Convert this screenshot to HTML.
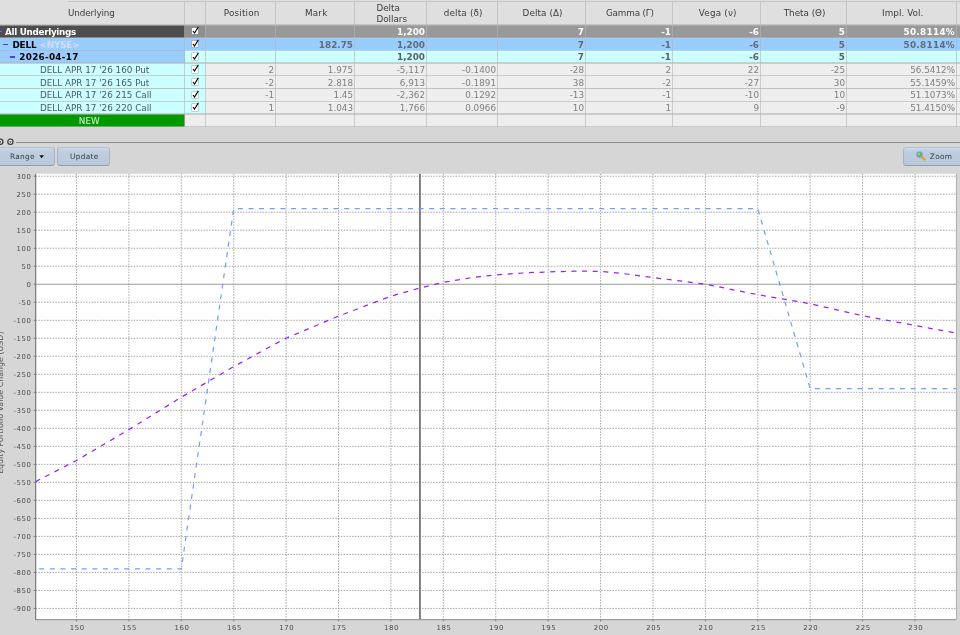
<!DOCTYPE html><html><head><meta charset="utf-8"><title>Risk Navigator</title><style>
html,body{margin:0;padding:0}
body{width:960px;height:635px;overflow:hidden;background:#d6d6d6;position:relative;font-family:"DejaVu Sans","Liberation Sans",sans-serif;font-size:8.8px;color:#444}
.a{position:absolute}
.c{position:absolute;box-sizing:border-box}
.t{position:absolute;white-space:pre;line-height:12px;height:12px}
.r{text-align:right}
.m{text-align:center}
.b{font-weight:bold}
.btn{position:absolute;box-sizing:border-box;border:1px solid #a3b3c6;border-top-color:#b3c3d5;border-bottom-color:#8e9fb4;border-radius:3.5px;background:linear-gradient(#cbdaea 0,#bfcede 22%,#bac9da 100%);}
.cb{position:absolute;width:6.6px;height:6.4px;background:#fff;box-shadow:0 0 0 0.4px #999}

</style></head><body><div id="w" style="position:absolute;left:0;top:0;width:960px;height:635px;will-change:transform">
<div class="c" style="left:0;top:0;width:960px;height:25.00px;background:#dfdfdf"></div>
<div class="c" style="left:68px;top:0.9px;width:892px;height:1.3px;background:#c4c4c4"></div>
<div class="c" style="left:0.00px;top:25.00px;width:184.50px;height:12.70px;background:#4d4d4d"></div>
<div class="c" style="left:184.50px;top:25.00px;width:21.00px;height:12.70px;background:#8f8f8f"></div>
<div class="c" style="left:205.50px;top:25.00px;width:754.50px;height:12.70px;background:#999999"></div>
<div class="c" style="left:0.00px;top:37.70px;width:184.50px;height:12.70px;background:#99ccff"></div>
<div class="c" style="left:184.50px;top:37.70px;width:21.00px;height:12.70px;background:#99ccff"></div>
<div class="c" style="left:205.50px;top:37.70px;width:754.50px;height:12.70px;background:#99ccff"></div>
<div class="c" style="left:0.00px;top:50.40px;width:184.50px;height:12.70px;background:#99ccff"></div>
<div class="c" style="left:184.50px;top:50.40px;width:21.00px;height:12.70px;background:#ccffff"></div>
<div class="c" style="left:205.50px;top:50.40px;width:754.50px;height:12.70px;background:#ccffff"></div>
<div class="c" style="left:0.00px;top:63.10px;width:184.50px;height:12.70px;background:#ccffff"></div>
<div class="c" style="left:184.50px;top:63.10px;width:21.00px;height:12.70px;background:#ccffff"></div>
<div class="c" style="left:205.50px;top:63.10px;width:754.50px;height:12.70px;background:#eeeeee"></div>
<div class="c" style="left:0.00px;top:75.80px;width:184.50px;height:12.70px;background:#ccffff"></div>
<div class="c" style="left:184.50px;top:75.80px;width:21.00px;height:12.70px;background:#ccffff"></div>
<div class="c" style="left:205.50px;top:75.80px;width:754.50px;height:12.70px;background:#eeeeee"></div>
<div class="c" style="left:0.00px;top:88.50px;width:184.50px;height:12.70px;background:#ccffff"></div>
<div class="c" style="left:184.50px;top:88.50px;width:21.00px;height:12.70px;background:#ccffff"></div>
<div class="c" style="left:205.50px;top:88.50px;width:754.50px;height:12.70px;background:#eeeeee"></div>
<div class="c" style="left:0.00px;top:101.20px;width:184.50px;height:12.70px;background:#ccffff"></div>
<div class="c" style="left:184.50px;top:101.20px;width:21.00px;height:12.70px;background:#ccffff"></div>
<div class="c" style="left:205.50px;top:101.20px;width:754.50px;height:12.70px;background:#eeeeee"></div>
<div class="c" style="left:0.00px;top:113.90px;width:184.50px;height:12.70px;background:#009900"></div>
<div class="c" style="left:184.50px;top:113.90px;width:21.00px;height:12.70px;background:#eeeeee"></div>
<div class="c" style="left:205.50px;top:113.90px;width:754.50px;height:12.70px;background:#eeeeee"></div>
<div class="c" style="left:0;top:24.30px;width:960px;height:1.4px;background:rgba(180,180,180,.6)"></div>
<div class="c" style="left:0;top:37.00px;width:960px;height:1.4px;background:rgba(180,180,180,.6)"></div>
<div class="c" style="left:0;top:49.70px;width:960px;height:1.4px;background:rgba(180,180,180,.6)"></div>
<div class="c" style="left:0;top:62.40px;width:960px;height:1.4px;background:rgba(180,180,180,.6)"></div>
<div class="c" style="left:0;top:75.10px;width:960px;height:1.4px;background:rgba(180,180,180,.6)"></div>
<div class="c" style="left:0;top:87.80px;width:960px;height:1.4px;background:rgba(180,180,180,.6)"></div>
<div class="c" style="left:0;top:100.50px;width:960px;height:1.4px;background:rgba(180,180,180,.6)"></div>
<div class="c" style="left:0;top:113.20px;width:960px;height:1.4px;background:rgba(180,180,180,.6)"></div>
<div class="c" style="left:0;top:125.90px;width:960px;height:1.4px;background:rgba(180,180,180,.6)"></div>
<div class="c" style="left:183.80px;top:2.00px;width:1.4px;height:124.60px;background:rgba(180,180,180,.62)"></div>
<div class="c" style="left:204.80px;top:2.00px;width:1.4px;height:124.60px;background:rgba(180,180,180,.62)"></div>
<div class="c" style="left:274.80px;top:2.00px;width:1.4px;height:124.60px;background:rgba(180,180,180,.62)"></div>
<div class="c" style="left:353.80px;top:2.00px;width:1.4px;height:124.60px;background:rgba(180,180,180,.62)"></div>
<div class="c" style="left:425.80px;top:2.00px;width:1.4px;height:124.60px;background:rgba(180,180,180,.62)"></div>
<div class="c" style="left:496.80px;top:2.00px;width:1.4px;height:124.60px;background:rgba(180,180,180,.62)"></div>
<div class="c" style="left:584.80px;top:2.00px;width:1.4px;height:124.60px;background:rgba(180,180,180,.62)"></div>
<div class="c" style="left:671.80px;top:2.00px;width:1.4px;height:124.60px;background:rgba(180,180,180,.62)"></div>
<div class="c" style="left:759.80px;top:2.00px;width:1.4px;height:124.60px;background:rgba(180,180,180,.62)"></div>
<div class="c" style="left:845.80px;top:2.00px;width:1.4px;height:124.60px;background:rgba(180,180,180,.62)"></div>
<div class="c" style="left:955.80px;top:2.00px;width:1.4px;height:124.60px;background:rgba(180,180,180,.62)"></div>
<div class="t m" style="left:-0.85px;width:184.50px;top:7.30px;color:#3c3c3c;letter-spacing:-0.10px;">Underlying</div>
<div class="t m" style="left:206.70px;width:70.00px;top:7.30px;color:#3c3c3c;letter-spacing:0.20px;">Position</div>
<div class="t m" style="left:276.70px;width:79.00px;top:7.30px;color:#3c3c3c;letter-spacing:0.20px;">Mark</div>
<div class="t m" style="left:427.70px;width:71.00px;top:7.30px;color:#3c3c3c;letter-spacing:0.20px;">delta (δ)</div>
<div class="t m" style="left:498.55px;width:88.00px;top:7.30px;color:#3c3c3c;letter-spacing:0.10px;">Delta (Δ)</div>
<div class="t m" style="left:586.42px;width:87.00px;top:7.30px;color:#3c3c3c;letter-spacing:-0.15px;">Gamma (Γ)</div>
<div class="t m" style="left:673.70px;width:88.00px;top:7.30px;color:#3c3c3c;letter-spacing:0.20px;">Vega (ν)</div>
<div class="t m" style="left:761.60px;width:86.00px;top:7.30px;color:#3c3c3c;letter-spacing:0.00px;">Theta (Θ)</div>
<div class="t m" style="left:847.73px;width:110.00px;top:7.30px;color:#3c3c3c;letter-spacing:0.05px;">Impl. Vol.</div>
<div class="t " style="left:376.40px;width:43.60px;top:1.60px;color:#3c3c3c;">Delta</div>
<div class="t " style="left:376.40px;width:43.60px;top:12.80px;color:#3c3c3c;">Dollars</div>
<div class="t b" style="left:5.00px;width:179.00px;top:25.85px;color:#fff;letter-spacing:-0.3px;">All Underlyings</div>
<div class="c" style="left:-2.00px;top:30.95px;width:4.20px;height:1.50px;background:#6a6aff"></div>
<div class="c" style="left:3.30px;top:43.65px;width:5.10px;height:1.50px;background:#4646d2"></div>
<div class="t b" style="left:12.40px;width:171.60px;top:38.55px;color:#000;letter-spacing:-0.12px;">DELL <span style="color:#d6dcee">&lt;NYSE&gt;</span></div>
<div class="c" style="left:10.30px;top:56.35px;width:5.20px;height:1.50px;background:#4646d2"></div>
<div class="t b" style="left:19.30px;width:164.70px;top:51.25px;color:#000;letter-spacing:0.3px;">2026-04-17</div>
<div class="t " style="left:40.00px;width:144.00px;top:63.95px;color:#4a5a66;">DELL APR 17 '26 160 Put</div>
<div class="t " style="left:40.00px;width:144.00px;top:76.65px;color:#4a5a66;">DELL APR 17 '26 165 Put</div>
<div class="t " style="left:40.00px;width:144.00px;top:89.35px;color:#4a5a66;">DELL APR 17 '26 215 Call</div>
<div class="t " style="left:40.00px;width:144.00px;top:102.05px;color:#4a5a66;">DELL APR 17 '26 220 Call</div>
<div class="t m" style="left:0.00px;width:178.50px;top:114.75px;color:#e6eee6;">NEW</div>
<div class="cb" style="left:191.6px;top:28.05px"></div>
<svg class="a" style="left:190px;top:26.25px" width="10" height="10" viewBox="0 0 10 10"><path d="M3 5.0 L4.5 7.0 L8.4 0.9" fill="none" stroke="#000" stroke-width="1.1"/></svg>
<div class="cb" style="left:191.6px;top:40.75px"></div>
<svg class="a" style="left:190px;top:38.95px" width="10" height="10" viewBox="0 0 10 10"><path d="M3 5.0 L4.5 7.0 L8.4 0.9" fill="none" stroke="#000" stroke-width="1.1"/></svg>
<div class="cb" style="left:191.6px;top:53.45px"></div>
<svg class="a" style="left:190px;top:51.65px" width="10" height="10" viewBox="0 0 10 10"><path d="M3 5.0 L4.5 7.0 L8.4 0.9" fill="none" stroke="#000" stroke-width="1.1"/></svg>
<div class="cb" style="left:191.6px;top:66.15px"></div>
<svg class="a" style="left:190px;top:64.35px" width="10" height="10" viewBox="0 0 10 10"><path d="M3 5.0 L4.5 7.0 L8.4 0.9" fill="none" stroke="#000" stroke-width="1.1"/></svg>
<div class="cb" style="left:191.6px;top:78.85px"></div>
<svg class="a" style="left:190px;top:77.05px" width="10" height="10" viewBox="0 0 10 10"><path d="M3 5.0 L4.5 7.0 L8.4 0.9" fill="none" stroke="#000" stroke-width="1.1"/></svg>
<div class="cb" style="left:191.6px;top:91.55px"></div>
<svg class="a" style="left:190px;top:89.75px" width="10" height="10" viewBox="0 0 10 10"><path d="M3 5.0 L4.5 7.0 L8.4 0.9" fill="none" stroke="#000" stroke-width="1.1"/></svg>
<div class="cb" style="left:191.6px;top:104.25px"></div>
<svg class="a" style="left:190px;top:102.45px" width="10" height="10" viewBox="0 0 10 10"><path d="M3 5.0 L4.5 7.0 L8.4 0.9" fill="none" stroke="#000" stroke-width="1.1"/></svg>
<div class="t r b" style="left:354.50px;width:70.50px;top:25.85px;color:#fff;letter-spacing:0.03px;">1,200</div>
<div class="t r b" style="left:497.50px;width:86.50px;top:25.85px;color:#fff;letter-spacing:0.03px;">7</div>
<div class="t r b" style="left:585.50px;width:85.50px;top:25.85px;color:#fff;letter-spacing:0.03px;">-1</div>
<div class="t r b" style="left:672.50px;width:86.50px;top:25.85px;color:#fff;letter-spacing:0.03px;">-6</div>
<div class="t r b" style="left:760.50px;width:84.50px;top:25.85px;color:#fff;letter-spacing:0.03px;">5</div>
<div class="t r b" style="left:846.50px;width:108.50px;top:25.85px;color:#fff;letter-spacing:0.33px;margin-right:-0.33px;">50.8114%</div>
<div class="t r b" style="left:275.50px;width:77.50px;top:38.55px;color:#636b77;letter-spacing:0.03px;">182.75</div>
<div class="t r b" style="left:354.50px;width:70.50px;top:38.55px;color:#636b77;letter-spacing:0.03px;">1,200</div>
<div class="t r b" style="left:497.50px;width:86.50px;top:38.55px;color:#636b77;letter-spacing:0.03px;">7</div>
<div class="t r b" style="left:585.50px;width:85.50px;top:38.55px;color:#636b77;letter-spacing:0.03px;">-1</div>
<div class="t r b" style="left:672.50px;width:86.50px;top:38.55px;color:#636b77;letter-spacing:0.03px;">-6</div>
<div class="t r b" style="left:760.50px;width:84.50px;top:38.55px;color:#636b77;letter-spacing:0.03px;">5</div>
<div class="t r b" style="left:846.50px;width:108.50px;top:38.55px;color:#636b77;letter-spacing:0.33px;margin-right:-0.33px;">50.8114%</div>
<div class="t r b" style="left:354.50px;width:70.50px;top:51.25px;color:#5a5f66;letter-spacing:0.03px;">1,200</div>
<div class="t r b" style="left:497.50px;width:86.50px;top:51.25px;color:#5a5f66;letter-spacing:0.03px;">7</div>
<div class="t r b" style="left:585.50px;width:85.50px;top:51.25px;color:#5a5f66;letter-spacing:0.03px;">-1</div>
<div class="t r b" style="left:672.50px;width:86.50px;top:51.25px;color:#5a5f66;letter-spacing:0.03px;">-6</div>
<div class="t r b" style="left:760.50px;width:84.50px;top:51.25px;color:#5a5f66;letter-spacing:0.03px;">5</div>
<div class="t r " style="left:205.50px;width:68.50px;top:63.95px;color:#808080;letter-spacing:0px;">2</div>
<div class="t r " style="left:275.50px;width:77.50px;top:63.95px;color:#808080;letter-spacing:0px;">1.975</div>
<div class="t r " style="left:354.50px;width:70.50px;top:63.95px;color:#808080;letter-spacing:0px;">-5,117</div>
<div class="t r " style="left:426.50px;width:69.50px;top:63.95px;color:#808080;letter-spacing:0px;">-0.1400</div>
<div class="t r " style="left:497.50px;width:86.50px;top:63.95px;color:#808080;letter-spacing:0px;">-28</div>
<div class="t r " style="left:585.50px;width:85.50px;top:63.95px;color:#808080;letter-spacing:0px;">2</div>
<div class="t r " style="left:672.50px;width:86.50px;top:63.95px;color:#808080;letter-spacing:0px;">22</div>
<div class="t r " style="left:760.50px;width:84.50px;top:63.95px;color:#808080;letter-spacing:0px;">-25</div>
<div class="t r " style="left:846.50px;width:108.50px;top:63.95px;color:#808080;letter-spacing:0px;">56.5412%</div>
<div class="t r " style="left:205.50px;width:68.50px;top:76.65px;color:#808080;letter-spacing:0px;">-2</div>
<div class="t r " style="left:275.50px;width:77.50px;top:76.65px;color:#808080;letter-spacing:0px;">2.818</div>
<div class="t r " style="left:354.50px;width:70.50px;top:76.65px;color:#808080;letter-spacing:0px;">6,913</div>
<div class="t r " style="left:426.50px;width:69.50px;top:76.65px;color:#808080;letter-spacing:0px;">-0.1891</div>
<div class="t r " style="left:497.50px;width:86.50px;top:76.65px;color:#808080;letter-spacing:0px;">38</div>
<div class="t r " style="left:585.50px;width:85.50px;top:76.65px;color:#808080;letter-spacing:0px;">-2</div>
<div class="t r " style="left:672.50px;width:86.50px;top:76.65px;color:#808080;letter-spacing:0px;">-27</div>
<div class="t r " style="left:760.50px;width:84.50px;top:76.65px;color:#808080;letter-spacing:0px;">30</div>
<div class="t r " style="left:846.50px;width:108.50px;top:76.65px;color:#808080;letter-spacing:0px;">55.1459%</div>
<div class="t r " style="left:205.50px;width:68.50px;top:89.35px;color:#808080;letter-spacing:0px;">-1</div>
<div class="t r " style="left:275.50px;width:77.50px;top:89.35px;color:#808080;letter-spacing:0px;">1.45</div>
<div class="t r " style="left:354.50px;width:70.50px;top:89.35px;color:#808080;letter-spacing:0px;">-2,362</div>
<div class="t r " style="left:426.50px;width:69.50px;top:89.35px;color:#808080;letter-spacing:0px;">0.1292</div>
<div class="t r " style="left:497.50px;width:86.50px;top:89.35px;color:#808080;letter-spacing:0px;">-13</div>
<div class="t r " style="left:585.50px;width:85.50px;top:89.35px;color:#808080;letter-spacing:0px;">-1</div>
<div class="t r " style="left:672.50px;width:86.50px;top:89.35px;color:#808080;letter-spacing:0px;">-10</div>
<div class="t r " style="left:760.50px;width:84.50px;top:89.35px;color:#808080;letter-spacing:0px;">10</div>
<div class="t r " style="left:846.50px;width:108.50px;top:89.35px;color:#808080;letter-spacing:0px;">51.1073%</div>
<div class="t r " style="left:205.50px;width:68.50px;top:102.05px;color:#808080;letter-spacing:0px;">1</div>
<div class="t r " style="left:275.50px;width:77.50px;top:102.05px;color:#808080;letter-spacing:0px;">1.043</div>
<div class="t r " style="left:354.50px;width:70.50px;top:102.05px;color:#808080;letter-spacing:0px;">1,766</div>
<div class="t r " style="left:426.50px;width:69.50px;top:102.05px;color:#808080;letter-spacing:0px;">0.0966</div>
<div class="t r " style="left:497.50px;width:86.50px;top:102.05px;color:#808080;letter-spacing:0px;">10</div>
<div class="t r " style="left:585.50px;width:85.50px;top:102.05px;color:#808080;letter-spacing:0px;">1</div>
<div class="t r " style="left:672.50px;width:86.50px;top:102.05px;color:#808080;letter-spacing:0px;">9</div>
<div class="t r " style="left:760.50px;width:84.50px;top:102.05px;color:#808080;letter-spacing:0px;">-9</div>
<div class="t r " style="left:846.50px;width:108.50px;top:102.05px;color:#808080;letter-spacing:0px;">51.4150%</div>
<div class="c" style="left:16.4px;top:142px;width:944px;height:1.2px;background:#8e8e8e"></div>
<svg class="a" style="left:-4px;top:137px" width="20" height="10" viewBox="0 0 20 10"><circle cx="4.3" cy="4.8" r="2.6" fill="#fff" stroke="#3a3a3a" stroke-width="1.3"/><path d="M3 4.2 L5.6 4.2 L4.3 6.1Z" fill="#222"/><circle cx="14.4" cy="4.8" r="2.6" fill="#fff" stroke="#3a3a3a" stroke-width="1.3"/><path d="M13.1 4.2 L15.7 4.2 L14.4 6.1Z" fill="#222"/></svg>
<div class="btn" style="left:-6px;top:147.1px;width:60.5px;height:18.7px"></div>
<div class="btn" style="left:57.3px;top:147.1px;width:52.3px;height:18.7px"></div>
<div class="btn" style="left:902.9px;top:147.1px;width:66px;height:18.7px"></div>
<div class="t " style="left:10.00px;width:30.00px;top:150.90px;color:#333c48;font-size:7.4px;letter-spacing:0.3px;">Range</div>
<svg class="a" style="left:38.5px;top:154.5px" width="6" height="4" viewBox="0 0 6 4"><path d="M0.3 0.3 L5 0.3 L2.65 3.2Z" fill="#111"/></svg>
<div class="t " style="left:70.00px;width:30.00px;top:150.90px;color:#333c48;font-size:7.4px;letter-spacing:0.3px;">Update</div>
<div class="t " style="left:929.80px;width:30.20px;top:150.90px;color:#333c48;font-size:7.4px;letter-spacing:0.3px;">Zoom</div>
<svg class="a" style="left:915px;top:150px" width="12" height="12" viewBox="0 0 12 12"><line x1="6.4" y1="6.6" x2="9.6" y2="9.7" stroke="#ee9a3c" stroke-width="2.4" stroke-linecap="round"/><circle cx="4.5" cy="4.5" r="2.65" fill="#46c046" stroke="#8ea3b7" stroke-width="1.4"/><circle cx="4" cy="4.1" r="0.9" fill="#b8eeb8"/></svg>
<svg class="a" style="left:0;top:0" width="960" height="635" viewBox="0 0 960 635" font-size="6.9" letter-spacing="0.62" fill="#4c4c4c">
<defs><clipPath id="pc"><rect x="35.70" y="173.80" width="920.40" height="445.50"/></clipPath></defs>
<rect x="35.70" y="173.80" width="920.40" height="445.50" fill="#fff"/>
<path d="M35.70 608.43H956.10M35.70 590.42H956.10M35.70 572.41H956.10M35.70 554.40H956.10M35.70 536.39H956.10M35.70 518.38H956.10M35.70 500.37H956.10M35.70 482.36H956.10M35.70 464.35H956.10M35.70 446.34H956.10M35.70 428.33H956.10M35.70 410.32H956.10M35.70 392.31H956.10M35.70 374.30H956.10M35.70 356.29H956.10M35.70 338.28H956.10M35.70 320.27H956.10M35.70 302.26H956.10M35.70 266.24H956.10M35.70 248.23H956.10M35.70 230.22H956.10M35.70 212.21H956.10M35.70 194.20H956.10M35.70 176.19H956.10M76.50 173.80V619.30M128.91 173.80V619.30M181.31 173.80V619.30M233.72 173.80V619.30M286.12 173.80V619.30M338.52 173.80V619.30M390.93 173.80V619.30M443.33 173.80V619.30M495.74 173.80V619.30M548.14 173.80V619.30M600.55 173.80V619.30M652.96 173.80V619.30M705.36 173.80V619.30M757.76 173.80V619.30M810.17 173.80V619.30M862.58 173.80V619.30M914.98 173.80V619.30" stroke="#9c9c9c" stroke-width="0.9" stroke-dasharray="1.5 1.3" fill="none"/>
<path d="M35.70 284.25H956.10" stroke="#9a9a9a" stroke-width="1.1"/>
<path d="M35.70 619.60H956.90" stroke="#9e9e9e" stroke-width="1.4" fill="none"/>
<path d="M956.50 173.80V620.10" stroke="#b4b4b4" stroke-width="1.2" fill="none"/>
<path d="M35.70 173.80V620.10" stroke="#707070" stroke-width="1.1" fill="none"/>
<path d="M35.70 608.43h-2M35.70 590.42h-2M35.70 572.41h-2M35.70 554.40h-2M35.70 536.39h-2M35.70 518.38h-2M35.70 500.37h-2M35.70 482.36h-2M35.70 464.35h-2M35.70 446.34h-2M35.70 428.33h-2M35.70 410.32h-2M35.70 392.31h-2M35.70 374.30h-2M35.70 356.29h-2M35.70 338.28h-2M35.70 320.27h-2M35.70 302.26h-2M35.70 284.25h-2M35.70 266.24h-2M35.70 248.23h-2M35.70 230.22h-2M35.70 212.21h-2M35.70 194.20h-2M35.70 176.19h-2M76.50 619.30v2M128.91 619.30v2M181.31 619.30v2M233.72 619.30v2M286.12 619.30v2M338.52 619.30v2M390.93 619.30v2M443.33 619.30v2M495.74 619.30v2M548.14 619.30v2M600.55 619.30v2M652.96 619.30v2M705.36 619.30v2M757.76 619.30v2M810.17 619.30v2M862.58 619.30v2M914.98 619.30v2" stroke="#707070" stroke-width="0.9" fill="none"/>
<g clip-path="url(#pc)" fill="none" stroke-width="1.3">
<path d="M419.95 173.80V619.30" stroke="#6c6c6c" stroke-width="1.7"/>
<path d="M39.19 568.81 L181.31 568.81 L233.72 208.61 L757.76 208.61 L810.17 388.71 L962.14 388.71" stroke="#6e9fff" stroke-width="1.2" stroke-dasharray="5 5.63"/>
<path d="M35.62 481.60 L76.50 460.50 L128.91 429.60 L181.31 397.20 L233.72 366.60 L269.98 346.80 L286.12 338.20 L338.52 316.10 L390.93 296.20 L419.75 288.00 L443.33 282.40 L469.54 278.00 L495.74 274.90 L521.94 273.00 L548.14 271.90 L574.35 271.20 L600.55 271.30 L626.75 274.00 L652.96 277.50 L705.36 284.20 L757.76 294.70 L810.17 303.70 L862.58 315.70 L914.98 325.50 L955.54 333.00 L962.14 334.20" stroke="#9a20f5" stroke-width="1.25" stroke-dasharray="5 5.63"/>
</g>
<text x="31.60" y="611.13" text-anchor="end">-900</text>
<text x="31.60" y="593.12" text-anchor="end">-850</text>
<text x="31.60" y="575.11" text-anchor="end">-800</text>
<text x="31.60" y="557.10" text-anchor="end">-750</text>
<text x="31.60" y="539.09" text-anchor="end">-700</text>
<text x="31.60" y="521.08" text-anchor="end">-650</text>
<text x="31.60" y="503.07" text-anchor="end">-600</text>
<text x="31.60" y="485.06" text-anchor="end">-550</text>
<text x="31.60" y="467.05" text-anchor="end">-500</text>
<text x="31.60" y="449.04" text-anchor="end">-450</text>
<text x="31.60" y="431.03" text-anchor="end">-400</text>
<text x="31.60" y="413.02" text-anchor="end">-350</text>
<text x="31.60" y="395.01" text-anchor="end">-300</text>
<text x="31.60" y="377.00" text-anchor="end">-250</text>
<text x="31.60" y="358.99" text-anchor="end">-200</text>
<text x="31.60" y="340.98" text-anchor="end">-150</text>
<text x="31.60" y="322.97" text-anchor="end">-100</text>
<text x="31.60" y="304.96" text-anchor="end">-50</text>
<text x="31.60" y="286.95" text-anchor="end">0</text>
<text x="31.60" y="268.94" text-anchor="end">50</text>
<text x="31.60" y="250.93" text-anchor="end">100</text>
<text x="31.60" y="232.92" text-anchor="end">150</text>
<text x="31.60" y="214.91" text-anchor="end">200</text>
<text x="31.60" y="196.90" text-anchor="end">250</text>
<text x="31.60" y="178.89" text-anchor="end">300</text>
<text x="77.20" y="630.20" text-anchor="middle">150</text>
<text x="129.60" y="630.20" text-anchor="middle">155</text>
<text x="182.01" y="630.20" text-anchor="middle">160</text>
<text x="234.41" y="630.20" text-anchor="middle">165</text>
<text x="286.82" y="630.20" text-anchor="middle">170</text>
<text x="339.22" y="630.20" text-anchor="middle">175</text>
<text x="391.63" y="630.20" text-anchor="middle">180</text>
<text x="444.03" y="630.20" text-anchor="middle">185</text>
<text x="496.44" y="630.20" text-anchor="middle">190</text>
<text x="548.85" y="630.20" text-anchor="middle">195</text>
<text x="601.25" y="630.20" text-anchor="middle">200</text>
<text x="653.66" y="630.20" text-anchor="middle">205</text>
<text x="706.06" y="630.20" text-anchor="middle">210</text>
<text x="758.47" y="630.20" text-anchor="middle">215</text>
<text x="810.87" y="630.20" text-anchor="middle">220</text>
<text x="863.28" y="630.20" text-anchor="middle">225</text>
<text x="915.68" y="630.20" text-anchor="middle">230</text>
<text transform="translate(3.0,402.7) rotate(-90)" text-anchor="middle" font-size="7.9" letter-spacing="0" fill="#555">Equity Portfolio Value Change (USD)</text>
</svg>
</div></body></html>
